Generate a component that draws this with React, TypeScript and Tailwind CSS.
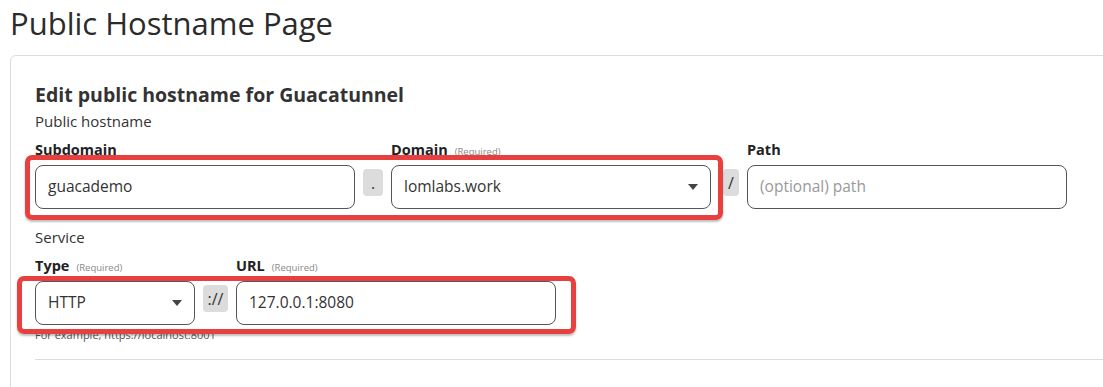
const font = { fontFamily: '"Open Sans", "Noto Sans", sans-serif' };

function Caret() {
  return (
    <svg width="10" height="6" viewBox="0 0 10 6" className="shrink-0">
      <path d="M0 0 L10 0 L5 6 Z" fill="#444" />
    </svg>
  );
}

function Label({ text, required }: { text: string; required?: boolean }) {
  return (
    <div className="flex items-baseline gap-[7px] h-[20px]">
      <span className="text-[14.5px] font-bold text-[#222] leading-[20px]">{text}</span>
      {required && <span className="text-[9.5px] text-[#888]">(Required)</span>}
    </div>
  );
}

function Input({ value, placeholder, width }: { value?: string; placeholder?: string; width: string }) {
  return (
    <div
      className={`${width} h-[44px] shrink-0 border border-[#555] rounded-[8px] bg-white flex items-center px-[12px] text-[15.5px]`}
    >
      {value ? (
        <span className="text-[#333]">{value}</span>
      ) : (
        <span className="text-[#999]">{placeholder}</span>
      )}
    </div>
  );
}

function Select({ value, width }: { value: string; width: string }) {
  return (
    <div
      className={`${width} h-[44px] shrink-0 border border-[#555] rounded-[8px] bg-white flex items-center justify-between pl-[12px] pr-[12px] text-[15.5px] text-[#333]`}
    >
      <span>{value}</span>
      <Caret />
    </div>
  );
}

function Addon({ text, width }: { text: string; width: string }) {
  return (
    <div
      className={`${width} h-[27px] mt-[4px] shrink-0 rounded-[4px] bg-[#dcdcdc] flex items-center justify-center text-[16px] text-[#333]`}
    >
      {text}
    </div>
  );
}

export default function App() {
  return (
    <div className="w-[1103px] h-[387px] overflow-hidden bg-white text-[#333]" style={font}>
      <div className="pl-[10px]">
        <h1 className="text-[31px] leading-[44px] text-[#2b2b2b] pt-[1px] font-[450]">Public Hostname Page</h1>

        <div className="mt-[10px] w-[1130px] h-[400px] border border-[#dcdcdc] rounded-[6px] pl-[24px] pt-[25px]">
          <h2 className="text-[19.5px] font-bold leading-[28px] text-[#333]">
            Edit public hostname for Guacatunnel
          </h2>
          <div className="text-[15px] leading-[22px] text-[#333] mt-[1px]">Public hostname</div>

          {/* hostname row */}
          <div className="flex mt-[8px]">
            <div className="w-[356px]">
              <Label text="Subdomain" />
            </div>
            <div className="w-[356px]">
              <Label text="Domain" required />
            </div>
            <Label text="Path" />
          </div>
          <div className="relative flex items-start mt-[5px]">
            <Input value="guacademo" width="w-[320px]" />
            <div className="w-[8px]" />
            <Addon text="." width="w-[20px]" />
            <div className="w-[8px]" />
            <Select value="lomlabs.work" width="w-[320px]" />
            <div className="w-[12px]" />
            <Addon text="/" width="w-[16px]" />
            <div className="w-[8px]" />
            <Input placeholder="(optional) path" width="w-[320px]" />
            <div className="absolute left-[-10px] top-[-10px] w-[698px] h-[65px] border-[5px] border-[#e8403f] rounded-[7px] shadow-[0_2px_2px_rgba(0,0,0,0.25)]" />
          </div>

          {/* service row */}
          <div className="text-[15px] leading-[22px] text-[#333] mt-[17px]">Service</div>
          <div className="flex mt-[8px]">
            <div className="w-[201px]">
              <Label text="Type" required />
            </div>
            <Label text="URL" required />
          </div>
          <div className="relative flex items-start mt-[5px]">
            <Select value="HTTP" width="w-[160px]" />
            <div className="w-[8px]" />
            <Addon text="://" width="w-[25px]" />
            <div className="w-[8px]" />
            <Input value="127.0.0.1:8080" width="w-[320px]" />
            <div className="absolute left-[-18px] top-[-5px] w-[559px] h-[58px] border-[5px] border-[#e8403f] rounded-[7px] shadow-[0_2px_2px_rgba(0,0,0,0.25)]" />
          </div>
          <div className="text-[11px] leading-[14px] text-[#555] mt-[3px]">For example, https://localhost:8001</div>
          <div className="mt-[17px] h-px bg-[#dcdcdc]" />
        </div>
      </div>
    </div>
  );
}
